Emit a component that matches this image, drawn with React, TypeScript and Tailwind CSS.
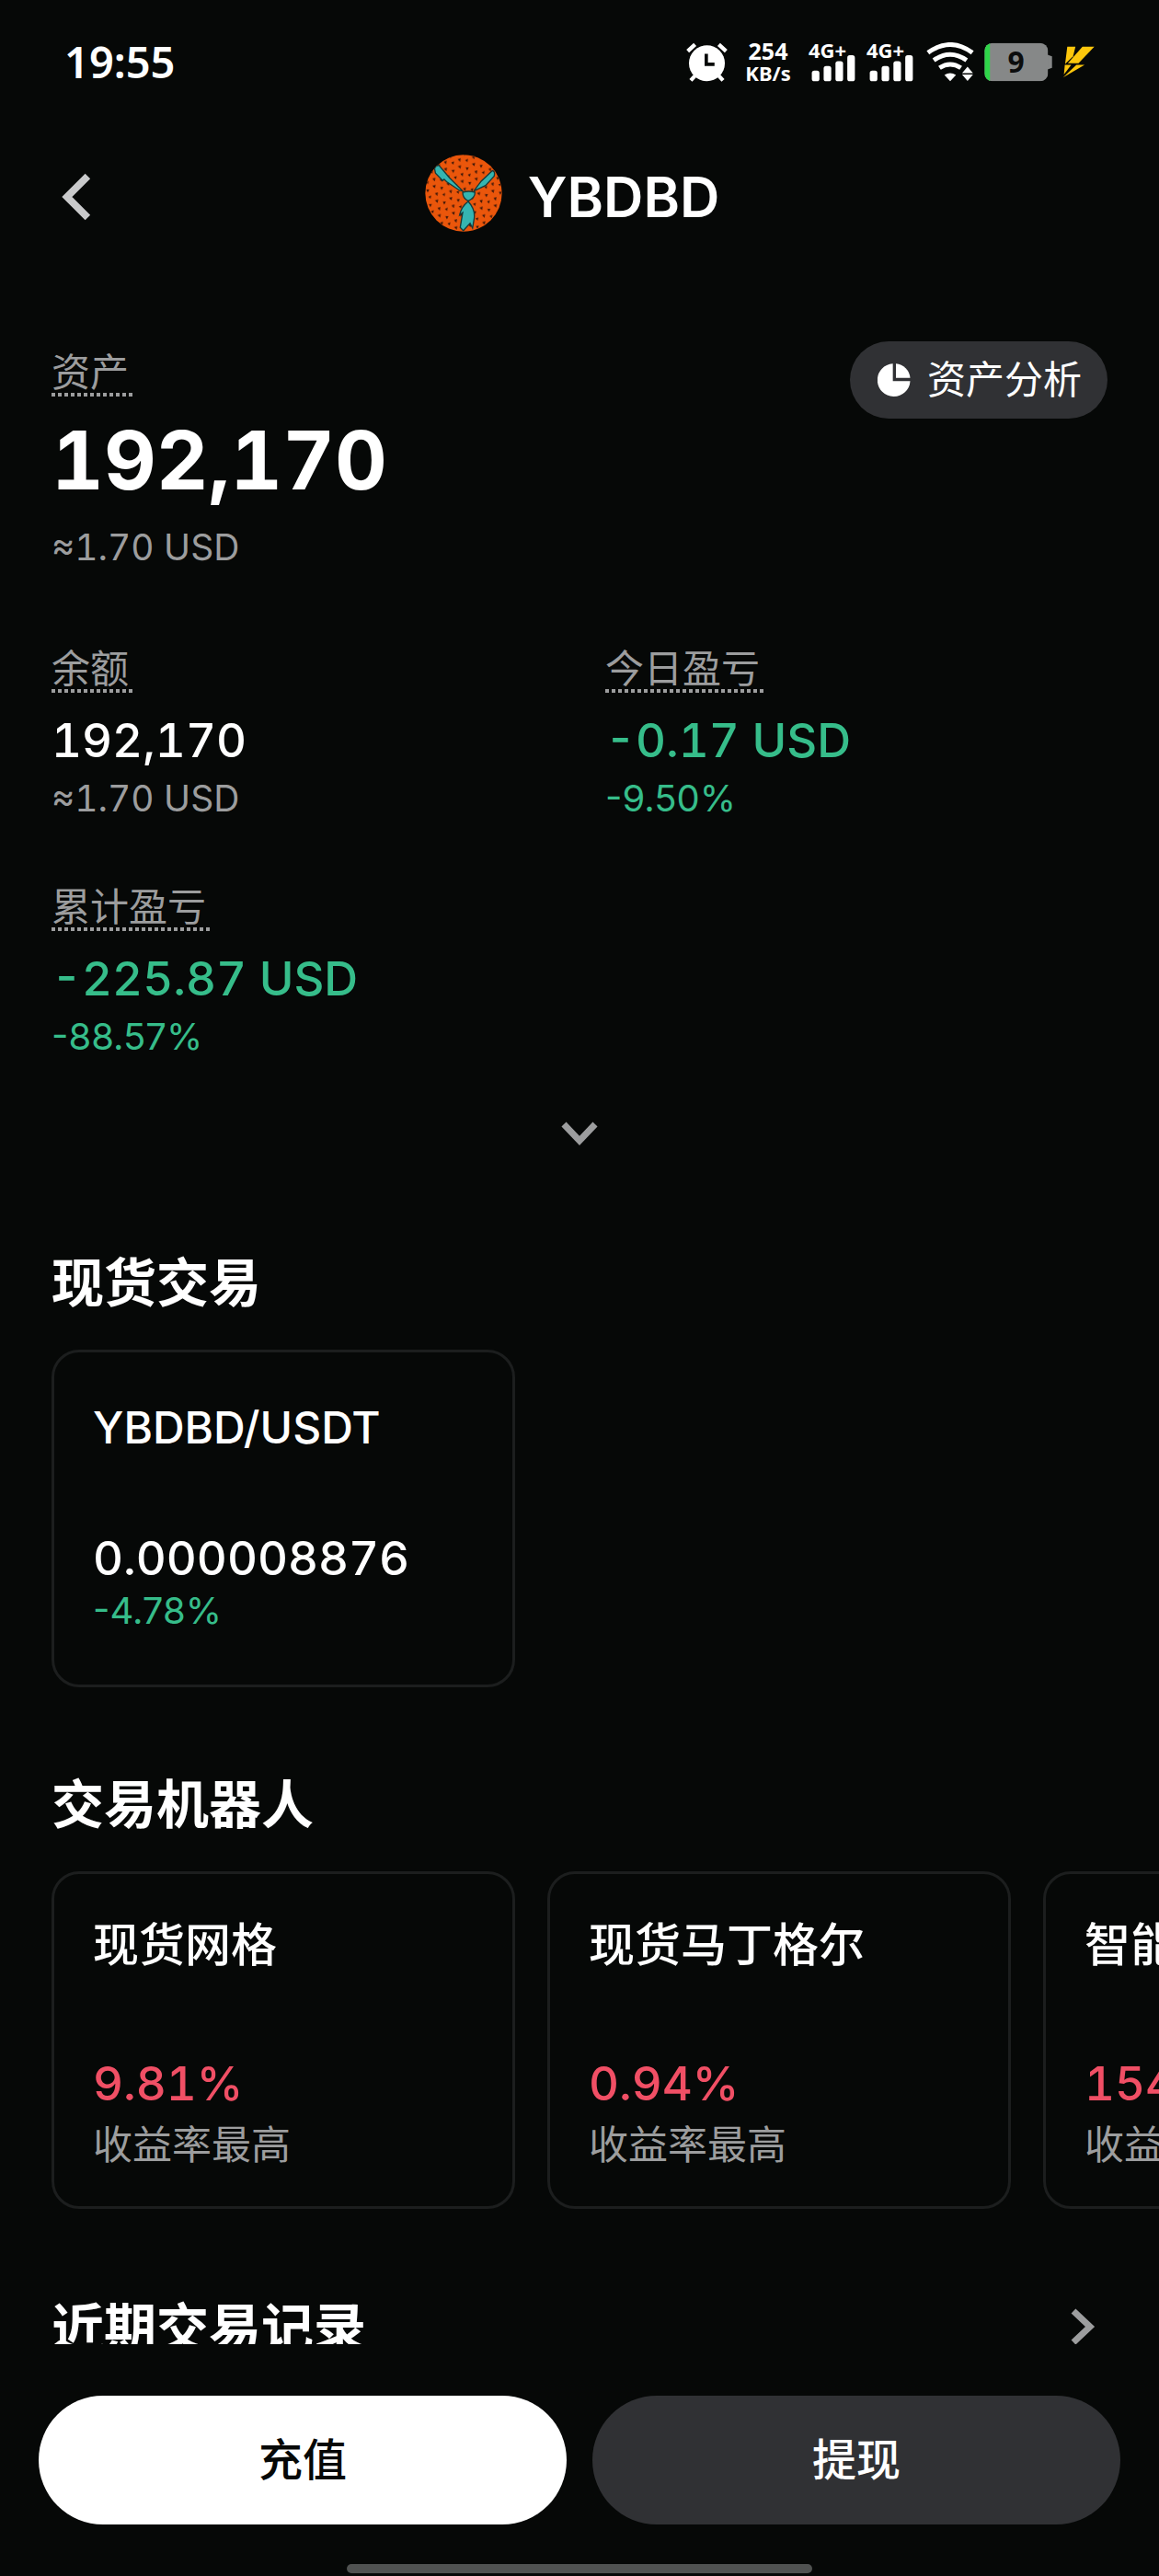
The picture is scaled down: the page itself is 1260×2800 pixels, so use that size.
interface StatProps {
  label: string;
  value: string;
  sub: string;
  loss?: boolean;
}

interface TradeCardProps {
  title: string;
  value: string;
  sub: string;
}

const robots: TradeCardProps[] = [
  { title: "现货网格", value: "9.81%", sub: "收益率最高" },
  { title: "现货马丁格尔", value: "0.94%", sub: "收益率最高" },
  { title: "智能套利", value: "154.20%", sub: "收益率最高" },
];

function Chevron({ d, className }: { d: string; className: string }) {
  return (
    <svg
      viewBox="0 0 48 48"
      className={className}
      fill="none"
      stroke="currentColor"
      strokeWidth="7"
      strokeLinejoin="miter"
    >
      <path d={d} />
    </svg>
  );
}

function Signal() {
  return (
    <div className="flex w-[51px] flex-col">
      <div className="h-[17px] text-[22px] leading-[17px] font-bold">4G+</div>
      <svg viewBox="480 88 153 88" className="-mt-[3px] h-[29px]" fill="#fff">
        <rect x="490" y="139" width="25" height="35" rx="8" />
        <rect x="529" y="124" width="25" height="50" rx="8" />
        <rect x="568" y="108" width="25" height="66" rx="8" />
        <rect x="607" y="88" width="25" height="86" rx="8" />
      </svg>
    </div>
  );
}

function StatusBar() {
  return (
    <div className="flex h-[134px] shrink-0 items-center justify-between px-[70px] font-['Noto_Sans',sans-serif] text-white">
      <span className="text-[47px] leading-[48px] font-semibold">19:55</span>
      <div className="flex items-center">
        <svg viewBox="80 46 134 130" className="h-[43px] w-[45px]">
          <g stroke="#fff" strokeWidth="13" strokeLinecap="butt">
            <path d="M84 75 L108 53 M186 53 L210 75" />
            <path d="M108 156 L94 171 M186 156 L200 171" />
          </g>
          <circle cx="147" cy="115" r="59" fill="#fff" />
          <path
            d="M145 84 V118 H172"
            fill="none"
            stroke="#060807"
            strokeWidth="11"
          />
        </svg>
        <div className="ml-[18px] w-[52px] text-center font-bold">
          <div className="text-[25px] leading-[24px]">254</div>
          <div className="text-[22px] leading-[24px]">KB/s</div>
        </div>
        <div className="ml-[18px] flex gap-[12px]">
          <Signal />
          <Signal />
        </div>
        <svg viewBox="860 46 156 130" className="ml-[14px] h-[43px] w-[52px]">
          <g fill="none" stroke="#fff" strokeWidth="15">
            <path d="M865 80 Q938 27 1011 80" />
            <path d="M884 105 Q938 67 992 105" />
            <path d="M903 130 Q938 107 973 130" />
          </g>
          <path
            d="M919 153 Q938 142 957 153 L938 174Z M977 147 L995 126 L1013 147Z M977 152 H1013 L995 173Z"
            fill="#fff"
          />
        </svg>
        <svg viewBox="1050 46 222 130" className="ml-[11px] h-[43px] w-[74px]">
          <defs>
            <clipPath id="cell">
              <rect x="1050" y="48" width="209" height="126" rx="26" />
            </clipPath>
          </defs>
          <path d="M1255 86 L1272 92 V130 L1255 136Z" fill="#868888" />
          <g clipPath="url(#cell)">
            <rect x="1050" y="48" width="209" height="126" fill="#868888" />
            <rect x="1050" y="48" width="18" height="126" fill="#2fd549" />
          </g>
          <text
            x="1154"
            y="147"
            textAnchor="middle"
            fontSize="96"
            fontWeight="700"
            fill="#0c0d0d"
            fontFamily="'Noto Sans', sans-serif"
          >
            9
          </text>
        </svg>
        <svg
          viewBox="272 28 106 106"
          className="ml-[11px] size-[35px]"
          fill="#fdc70c"
        >
          <path d="M288 30 H315 L307 62 L281 87Z" />
          <path d="M338 30 H377 L325 85 H290Z" />
          <path d="M280 90 H301 L277 122Z" />
          <path d="M318 90 H345 L274 132Z" />
        </svg>
      </div>
    </div>
  );
}

function CoinLogo() {
  return (
    <svg viewBox="0 0 250 250" className="mb-2 size-[84px]">
      <defs>
        <pattern
          id="seeds"
          width="46"
          height="48"
          patternUnits="userSpaceOnUse"
          patternTransform="rotate(-10)"
        >
          <path
            d="M6 8 l11 -2 -4 11z M30 16 l10 1 -6 10z M10 33 l10 -1 -4 11z M33 40 l10 -2 -4 10z"
            fill="#3b1608"
          />
        </pattern>
        <clipPath id="coin">
          <circle cx="125" cy="125" r="124" />
        </clipPath>
      </defs>
      <g clipPath="url(#coin)">
        <rect width="250" height="250" fill="#ea560b" />
        <rect width="250" height="250" fill="url(#seeds)" />
        <g fill="#35b5b1" stroke="#173a3a" strokeWidth="4">
          <path d="M31 45 Q36 33 46 36 L80 76 L122 118 L112 116 L70 88 L62 80 L57 84 L34 60Z" />
          <path d="M218 52 Q228 54 224 70 L196 100 L158 118 L182 86Z" />
          <path d="M122 122 Q142 116 162 122 Q162 140 140 150 Q122 142 122 122Z" />
          <path d="M140 152 Q166 180 158 214 L154 238 L146 222 L124 246 L114 236 L122 188 L112 196 Q118 168 140 152Z" />
        </g>
      </g>
    </svg>
  );
}

function DottedLabel({ children }: { children: string }) {
  return (
    <div className="w-fit pr-1">
      <div className="text-[42px] leading-[44px] text-[#9c9d9e]">{children}</div>
      <div className="-mr-1 h-1 bg-[repeating-linear-gradient(90deg,#9c9d9e_0_4px,transparent_4px_7px)]" />
    </div>
  );
}

function Stat({ label, value, sub, loss }: StatProps) {
  return (
    <div>
      <DottedLabel>{label}</DottedLabel>
      <div
        className={`mt-[26px] text-[51px] leading-[52px] font-medium ${loss ? "text-[#36bd8a]" : "text-white"}`}
      >
        {value}
      </div>
      <div
        className={`mt-[17px] leading-[40px] ${loss ? "text-[40px] text-[#36bd8a] proportional-nums" : "text-[39px] text-[#9c9d9e]"}`}
      >
        {sub}
      </div>
    </div>
  );
}

function RobotCard({ title, value, sub }: TradeCardProps) {
  return (
    <a
      href="#"
      className="h-[367px] w-[504px] shrink-0 rounded-[30px] border-[3px] border-[#1c1e1e] px-[42px] pt-[52px]"
    >
      <div className="text-[50px] leading-[50px] font-medium whitespace-nowrap">
        {title}
      </div>
      <div className="mt-[100px] text-[51px] leading-[52px] font-medium text-[#f04f65]">
        {value}
      </div>
      <div className="mt-[19px] text-[43px] leading-[42px] text-[#9c9d9e]">
        {sub}
      </div>
    </a>
  );
}

export default function App() {
  return (
    <div className="flex h-screen flex-col overflow-hidden bg-[#060807] font-['Inter','Noto_Sans_CJK_SC',sans-serif] text-white tabular-nums">
      <StatusBar />

      <header className="grid h-[160px] shrink-0 grid-cols-[1fr_auto_1fr] items-center px-14">
        <button aria-label="返回" className="w-fit text-[#c9cacb]">
          <Chevron d="M35 4 L15 24 L35 44" className="size-[54px]" />
        </button>
        <div className="flex items-center gap-[28px] pr-4">
          <CoinLogo />
          <h1 className="text-[60px] leading-[60px] font-semibold">YBDBD</h1>
        </div>
      </header>

      <main className="min-h-0 flex-1 overflow-hidden pt-[77px]">
        <section className="px-14">
          <div className="flex items-start justify-between">
            <div className="pt-3">
              <DottedLabel>资产</DottedLabel>
              <div className="mt-[25px] text-[88px] leading-[88px] font-bold">
                192,170
              </div>
              <div className="mt-[31px] text-[39px] leading-[40px] text-[#9c9d9e]">
                ≈1.70 USD
              </div>
            </div>
            <button className="flex h-[84px] items-center gap-[18px] rounded-full bg-[#303134] pr-[28px] pl-[30px] text-[42px] leading-[42px]">
              <svg viewBox="165 142 106 107" className="size-[36px]" fill="#fff">
                <path d="M214 143 V199 H270 A53 53 0 1 1 214 143Z" />
                <path d="M224 143 A50 50 0 0 1 270 189 H224Z" />
              </svg>
              资产分析
            </button>
          </div>

          <div className="mt-[90px] grid grid-cols-2 gap-x-14 gap-y-[76px]">
            <Stat label="余额" value="192,170" sub="≈1.70 USD" />
            <Stat label="今日盈亏" value="-0.17 USD" sub="-9.50%" loss />
            <Stat label="累计盈亏" value="-225.87 USD" sub="-88.57%" loss />
          </div>

          <button
            aria-label="展开"
            className="mx-auto mt-[60px] flex size-12 items-center justify-center text-[#9c9d9e]"
          >
            <Chevron d="M7 15 L24 33 L41 15" className="size-12" />
          </button>
        </section>

        <section className="mt-[112px] px-14">
          <h2 className="text-[57px] leading-[56px] font-bold">现货交易</h2>
          <a
            href="#"
            className="mt-11 block h-[367px] w-[504px] rounded-[30px] border-[3px] border-[#1c1e1e] px-[42px] pt-[58px]"
          >
            <div className="text-[48px] leading-[48px] font-medium">
              YBDBD/USDT
            </div>
            <div className="mt-[92px] text-[51px] leading-[52px] font-medium">
              0.000008876
            </div>
            <div className="mt-[11px] text-[40px] leading-[40px] text-[#36bd8a] proportional-nums">
              -4.78%
            </div>
          </a>
        </section>

        <section className="mt-[100px]">
          <h2 className="px-14 text-[57px] leading-[56px] font-bold">
            交易机器人
          </h2>
          <div className="mt-11 flex gap-[35px] overflow-hidden px-14">
            {robots.map((robot) => (
              <RobotCard key={robot.title} {...robot} />
            ))}
          </div>
        </section>

        <section className="mt-[102px] px-14">
          <a href="#" className="flex h-[56px] items-center justify-between">
            <h2 className="text-[57px] leading-[56px] font-bold">
              近期交易记录
            </h2>
            <Chevron
              d="M15 7 L33 24 L15 41"
              className="mr-1 mb-1 size-12 text-[#9c9d9e]"
            />
          </a>
        </section>
      </main>

      <footer className="shrink-0 px-[42px] pt-14 pb-[3px]">
        <div className="grid grid-cols-2 gap-7 text-[48px] leading-[48px] font-medium">
          <button className="h-[140px] rounded-full bg-white text-[#060807]">
            充值
          </button>
          <button className="h-[140px] rounded-full bg-[#303134]">提现</button>
        </div>
        <div className="mx-auto mt-[43px] h-[10px] w-[43%] rounded-full bg-[#505251]" />
      </footer>
    </div>
  );
}
